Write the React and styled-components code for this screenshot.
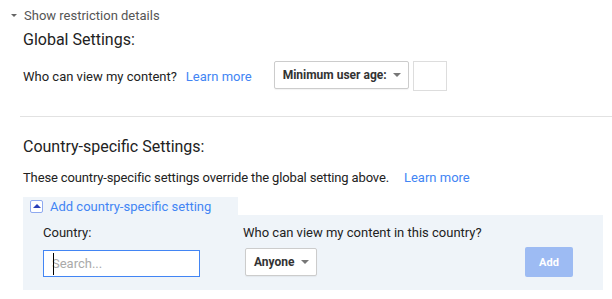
import React from 'react';
import styled, { createGlobalStyle } from 'styled-components';

const BLUE = '#4285f4';
const TEXT = '#222';
const PANEL = '#eff4f9';

const GlobalStyle = createGlobalStyle`
  html, body {
    margin: 0;
    padding: 0;
    background: #fff;
    font-family: Roboto, "Liberation Sans", Arial, sans-serif;
    color: ${TEXT};
  }
`;

const Page = styled.div`
  width: 612px;
  height: 299px;
  overflow: hidden;
  padding-top: 6px;
  box-sizing: border-box;
`;

const Toggle = styled.div`
  display: flex;
  align-items: center;
  gap: 7px;
  padding-left: 11px;
  font-size: 13px;
  color: #555;
  height: 18px;
`;

const Caret = styled.span`
  width: 0;
  height: 0;
  border-left: 3px solid transparent;
  border-right: 3px solid transparent;
  border-top: 3px solid #666;
  margin-top: 1px;
`;

const Section = styled.div`
  padding-left: 23px;
`;

const Heading = styled.h2`
  margin: 0;
  font-size: 16px;
  font-weight: normal;
  line-height: 20px;
  padding-top: ${p => p.top}px;
`;

const Row = styled.div`
  display: flex;
  align-items: center;
  font-size: 13px;
  margin-top: ${p => p.top}px;
  letter-spacing: ${p => p.tight ? '-0.14px' : 'normal'};
`;

const Link = styled.a`
  color: ${BLUE};
  text-decoration: none;
  letter-spacing: normal;
  margin-left: ${p => p.gap}px;
  cursor: pointer;
`;

const Select = styled.button`
  display: flex;
  align-items: center;
  align-self: flex-start;
  gap: 6px;
  height: ${p => p.h}px;
  padding: 0 7px 0 8px;
  border: 1px solid #ccc;
  border-radius: 2px;
  background: #fff;
  font-family: inherit;
  font-size: 12px;
  font-weight: bold;
  color: #333;
  box-shadow: 0 1px 1px rgba(0,0,0,0.05);
  margin-left: ${p => p.gap || 0}px;
`;

const SelectCaret = styled.span`
  width: 0;
  height: 0;
  border-left: 4px solid transparent;
  border-right: 4px solid transparent;
  border-top: 4px solid #777;
`;

const AgeBox = styled.div`
  width: 32px;
  height: 28px;
  border: 1px solid #ddd;
  margin-left: 4px;
  background: #fff;
`;

const Divider = styled.hr`
  border: 0;
  border-top: 1px solid #e2e2e2;
  margin: 25px 0 0 20px;
`;

const Tab = styled.div`
  display: flex;
  align-items: center;
  gap: 7px;
  width: 208px;
  height: 18px;
  padding-left: 7px;
  margin-top: 12px;
  background: ${PANEL};
  color: ${BLUE};
  font-size: 13px;
`;

const ToggleIcon = styled.span`
  width: 11px;
  height: 11px;
  border: 1px solid #8ea9f0;
  border-radius: 2px;
  background: #fff;
  display: flex;
  align-items: center;
  justify-content: center;
  &::after {
    content: '';
    border-left: 4px solid transparent;
    border-right: 4px solid transparent;
    border-bottom: 4px solid #2a3fb8;
    margin-top: -1px;
  }
`;

const Panel = styled.div`
  width: 580px;
  height: 75px;
  background: ${PANEL};
  display: grid;
  grid-template-columns: 200px 282px 48px;
  align-items: start;
  padding: 10px 0 0 20px;
  box-sizing: border-box;
`;

const Field = styled.div`
  display: flex;
  flex-direction: column;
  align-items: flex-start;
  gap: ${p => p.gap}px;
  font-size: 13px;
`;

const SearchWrap = styled.div`
  position: relative;
  width: 157px;
  height: 27px;
  border: 1px solid ${BLUE};
  background: #fff;
  box-sizing: border-box;
`;

const SearchInput = styled.input`
  width: 100%;
  height: 100%;
  border: 0;
  outline: none;
  padding: 0 8px;
  box-sizing: border-box;
  font-family: inherit;
  font-size: 13px;
  background: transparent;
  &::placeholder {
    color: #aaa;
  }
`;

const Cursor = styled.span`
  position: absolute;
  left: 9px;
  top: 2px;
  width: 1px;
  height: 22px;
  background: #000;
`;

const AddButton = styled.button`
  width: 48px;
  height: 30px;
  margin-top: 22px;
  border: 0;
  border-radius: 2px;
  background: #9dbbf3;
  color: #fff;
  font-family: inherit;
  font-size: 11px;
  font-weight: bold;
`;

export default function App() {
  return (
    <Page>
      <GlobalStyle />
      <Toggle><Caret />Show restriction details</Toggle>
      <Section>
        <Heading top={6}>Global Settings:</Heading>
        <Row top={11}>
          Who can view my content?
          <Link gap={9}>Learn more</Link>
          <Select h={28} gap={22}>Minimum user age:<SelectCaret /></Select>
          <AgeBox />
        </Row>
      </Section>
      <Divider />
      <Section>
        <Heading top={20}>Country-specific Settings:</Heading>
        <Row top={13} tight>
          These country-specific settings override the global setting above.
          <Link gap={15}>Learn more</Link>
        </Row>
        <Tab><ToggleIcon />Add country-specific setting</Tab>
        <Panel>
          <Field gap={10}>
            Country:
            <SearchWrap>
              <SearchInput placeholder="Search..." />
              <Cursor />
            </SearchWrap>
          </Field>
          <Field gap={8}>
            Who can view my content in this country?
            <Select h={28} gap={2}>Anyone<SelectCaret /></Select>
          </Field>
          <AddButton>Add</AddButton>
        </Panel>
      </Section>
    </Page>
  );
}
